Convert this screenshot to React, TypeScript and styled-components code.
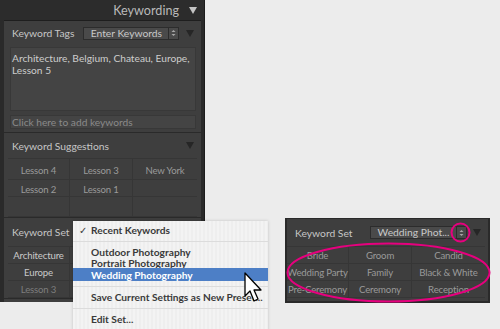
import React from "react";
import styled, { createGlobalStyle } from "styled-components";

const Global = createGlobalStyle`
  html, body { margin: 0; padding: 0; background: #ececec; }
  body { font-family: Lato, "Open Sans", sans-serif; }
`;

const Page = styled.div`
  position: relative;
  width: 500px;
  height: 329px;
  overflow: hidden;
  display: flex;
  align-items: flex-start;
  background: #ececec;
`;

const LeftPanel = styled.div`
  width: 205px;
  height: 302px;
  background: #2a2a2a;
  display: flex;
  flex-direction: column;
  box-sizing: border-box;
  border-right: 1px solid #1c1c1c;
`;

const PanelHeader = styled.div`
  height: 20px;
  display: flex;
  align-items: center;
  justify-content: flex-end;
  gap: 10px;
  padding-right: 7px;
  background: #2c2c2c;
  color: #b9b9b9;
  font-size: 12.6px;
`;

const Tri = styled.span<{ $dim?: boolean }>`
  flex: none;
  width: 0;
  height: 0;
  border-left: 4px solid transparent;
  border-right: 4px solid transparent;
  border-top: 7px solid ${(p) => (p.$dim ? "#262626" : "#c4c4c4")};
`;

const PanelBody = styled.div`
  flex: 1;
  margin: 0 3px 0 4px;
  background: #3e3e3e;
  border-top: 1px solid #1e1e1e;
  display: flex;
  flex-direction: column;
`;

const Section = styled.div`
  display: flex;
  flex-direction: column;
  border-bottom: 1px solid #2a2a2a;
`;

const HeadRow = styled.div<{ $h?: number }>`
  height: ${(p) => p.$h || 24}px;
  display: flex;
  align-items: center;
  padding: 0 7px 0 8px;
  color: #c6c6c6;
  font-size: 10.3px;
`;

const Label = styled.span`
  flex: none;
`;

const Spacer = styled.span`
  flex: 1;
`;

const Select = styled.div<{ $w: number; $ml: number }>`
  flex: none;
  box-sizing: border-box;
  width: ${(p) => p.$w}px;
  margin-left: ${(p) => p.$ml}px;
  margin-right: 6px;
  height: 13px;
  display: flex;
  background: #4a4a4a;
  border: 1px solid #2c2c2c;
  color: #c8c8c8;
  font-size: 10.3px;
`;

const SelectText = styled.span`
  flex: 1;
  text-align: center;
  line-height: 11px;
  white-space: nowrap;
  overflow: hidden;
`;

const Stepper = styled.span`
  width: 9px;
  border-left: 1px solid #2c2c2c;
  display: flex;
  align-items: center;
  justify-content: center;
`;

const TextArea = styled.div`
  margin: 2px 5px 0 6px;
  height: 64px;
  background: #444444;
  border: 1px solid #383838;
  padding: 4px 1px;
  box-sizing: border-box;
  color: #cdcdcd;
  font-size: 10.2px;
  line-height: 12px;
  white-space: nowrap;
`;

const AddField = styled.div`
  margin: 4px 5px 3px 6px;
  height: 12px;
  background: #444444;
  border: 1px solid #383838;
  padding: 0 1px;
  color: #8a8a8a;
  font-size: 10.2px;
  line-height: 12px;
`;

const Grid = styled.div<{ $mx?: string }>`
  margin: ${(p) => p.$mx || "0 4px 0 4px"};
  display: grid;
  grid-template-columns: 62px 63px 1fr;
  border-top: 1px solid #363636;
`;

const Cell = styled.div<{ $tone?: "bright" | "dim"; $h?: number; $last?: boolean; $pt?: number }>`
  box-sizing: border-box;
  height: ${(p) => p.$h || 17}px;
  padding-top: ${(p) => p.$pt || 0}px;
  display: flex;
  align-items: center;
  justify-content: center;
  font-size: 9.6px;
  letter-spacing: -0.15px;
  white-space: nowrap;
  color: ${(p) => (p.$tone === "bright" ? "#c9c9c9" : p.$tone === "dim" ? "#7d7d7d" : "#9a9a9a")};
  border-bottom: 1px solid #363636;
  border-right: ${(p) => (p.$last ? "none" : "1px solid #363636")};
`;

const RightPanel = styled.div`
  margin: 218px 0 0 80px;
  width: 205px;
  height: 85px;
  box-sizing: border-box;
  background: #3e3e3e;
  border: 2px solid #2a2a2a;
  border-top-width: 1px;
  display: flex;
  flex-direction: column;
`;

const Menu = styled.div`
  position: absolute;
  left: 73px;
  top: 221px;
  width: 195px;
  height: 112px;
  background: repeating-linear-gradient(90deg, #f3f3f3 0 2px, #eeeeee 2px 4px);
  box-shadow: 0 0 3px rgba(0, 0, 0, 0.18);
  padding-top: 2px;
  box-sizing: border-box;
  font-family: Lato, sans-serif;
  font-weight: 700;
  font-size: 10.2px;
  color: #3a3a3a;
`;

const MenuItem = styled.div<{ $active?: boolean; $h?: number }>`
  height: ${(p) => p.$h || 11}px;
  display: flex;
  align-items: center;
  padding-left: 18px;
  position: relative;
  background: ${(p) => (p.$active ? "#4d7fc6" : "transparent")};
  color: ${(p) => (p.$active ? "#ffffff" : "#3a3a3a")};
  white-space: nowrap;
`;

const Check = styled.span`
  position: absolute;
  left: 6px;
  font-weight: 400;
`;

const MenuSep = styled.div`
  height: 1px;
  margin: 5px 0 4px;
  background: #dcdcdc;
`;

const Overlay = styled.svg`
  position: absolute;
  left: 0;
  top: 0;
  pointer-events: none;
`;

const StepIcon = () => (
  <svg width="5" height="8" viewBox="0 0 5 8">
    <path d="M0.5 3 L2.5 1 L4.5 3 Z M0.5 5 L2.5 7 L4.5 5 Z" fill="#a8a8a8" />
  </svg>
);

type Row = [string, string, string];
type Tone = "bright" | "dim" | undefined;

const suggestions: Row[] = [
  ["Lesson 4", "Lesson 3", "New York"],
  ["Lesson 2", "Lesson 1", ""],
  ["", "", ""],
];

const wedding: Row[] = [
  ["Bride", "Groom", "Candid"],
  ["Wedding Party", "Family", "Black & White"],
  ["Pre-Ceremony", "Ceremony", "Reception"],
];

const KeywordGrid = ({
  rows,
  heights,
  tones,
  mx,
  pt,
}: {
  rows: Row[];
  heights: number[];
  tones?: Tone[][];
  mx?: string;
  pt?: number;
}) => (
  <Grid $mx={mx}>
    {rows.map((r, i) =>
      r.map((t, j) => (
        <Cell key={`${i}-${j}`} $h={heights[i]} $pt={pt} $last={j === 2} $tone={tones ? tones[i][j] : undefined}>
          {t}
        </Cell>
      ))
    )}
  </Grid>
);

export default function App() {
  return (
    <>
      <Global />
      <Page>
        <LeftPanel>
          <PanelHeader>
            <span>Keywording</span>
            <Tri />
          </PanelHeader>
          <PanelBody>
            <Section>
              <HeadRow $h={24}>
                <Label>Keyword Tags</Label>
                <Select $w={96} $ml={9}>
                  <SelectText>Enter Keywords</SelectText>
                  <Stepper><StepIcon /></Stepper>
                </Select>
                <Spacer />
                <Tri $dim />
              </HeadRow>
              <TextArea>
                Architecture, Belgium, Chateau, Europe,
                <br />
                Lesson 5
              </TextArea>
              <AddField>Click here to add keywords</AddField>
            </Section>
            <Section>
              <HeadRow $h={25}>
                <Label>Keyword Suggestions</Label>
                <Spacer />
                <Tri $dim />
              </HeadRow>
              <KeywordGrid rows={suggestions} heights={[21, 17, 20]} pt={3} />
            </Section>
            <Section>
              <HeadRow $h={28}>
                <Label>Keyword Set</Label>
              </HeadRow>
              <KeywordGrid
                rows={[
                  ["Architecture", "", ""],
                  ["Europe", "", ""],
                  ["Lesson 3", "", ""],
                ]}
                heights={[17, 17, 17]}
                tones={[
                  ["bright", undefined, undefined],
                  ["bright", undefined, undefined],
                  ["dim", undefined, undefined],
                ]}
              />
            </Section>
          </PanelBody>
        </LeftPanel>

        <RightPanel>
          <HeadRow $h={27}>
            <Label>Keyword Set</Label>
            <Spacer />
            <Select $w={97} $ml={0}>
              <SelectText>Wedding Phot...</SelectText>
              <Stepper><StepIcon /></Stepper>
            </Select>
            <Tri $dim />
          </HeadRow>
          <KeywordGrid rows={wedding} heights={[17, 17, 17]} mx="0 3px 0 0" />
        </RightPanel>

        <Menu>
          <MenuItem $h={13}>
            <Check>✓</Check>Recent Keywords
          </MenuItem>
          <MenuSep />
          <MenuItem>Outdoor Photography</MenuItem>
          <MenuItem>Portrait Photography</MenuItem>
          <MenuItem $active $h={13}>Wedding Photography</MenuItem>
          <MenuSep />
          <MenuItem $h={12}>Save Current Settings as New Preset...</MenuItem>
          <MenuSep />
          <MenuItem>Edit Set...</MenuItem>
        </Menu>

        <Overlay width="500" height="329" viewBox="0 0 500 329">
          <path
            d="M245 273 L245 296 L250 291 L254 301 L258 299 L254 290 L261 290 Z"
            fill="#ffffff"
            stroke="#000000"
            strokeWidth="1.3"
            strokeLinejoin="round"
          />
          <ellipse cx="388.5" cy="272.5" rx="101" ry="29" fill="none" stroke="#e6007e" strokeWidth="2" />
          <circle cx="460.5" cy="232.5" r="9" fill="none" stroke="#e6007e" strokeWidth="2" />
        </Overlay>
      </Page>
    </>
  );
}
